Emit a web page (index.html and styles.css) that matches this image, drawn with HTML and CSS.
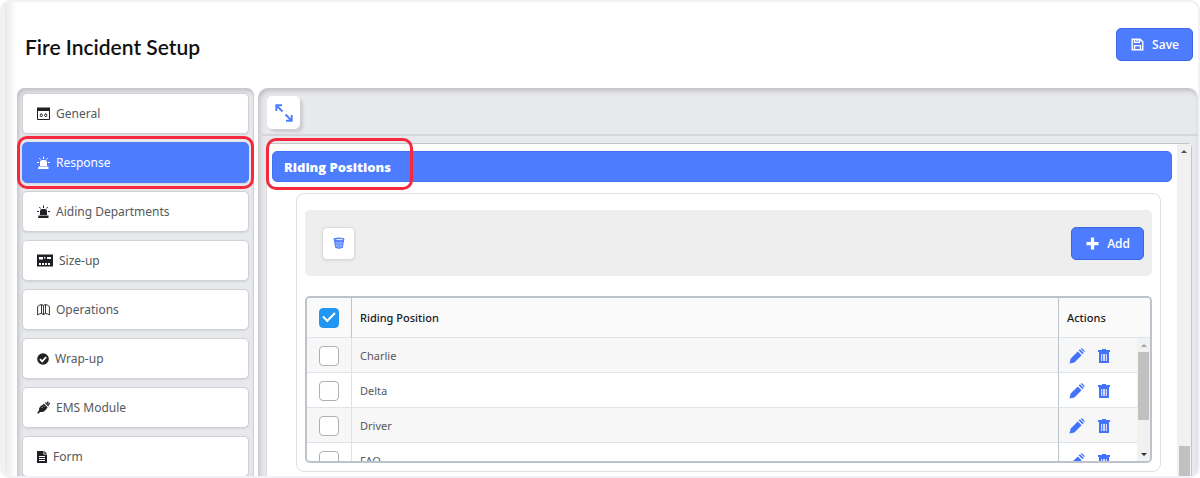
FILE: index.html
```html
<!DOCTYPE html>
<html lang="en">
<head>
    <meta charset="UTF-8">
    <meta name="viewport" content="width=device-width, initial-scale=1.0">
    <title>Fire Incident Setup</title>
    <link rel="stylesheet" href="styles.css">
</head>
<body>
    <!-- Shared icons -->
    <svg class="sprite" aria-hidden="true">
        <symbol id="siren" viewBox="0 0 13 13">
            <path fill="currentColor" d="M1.500 10.500h10V13H1zM3 10V6Q3 4 5.500 4h2Q10 4 10 6v4z"/>
            <path fill="none" stroke="currentColor" d="M6.500.5v2.500M2.300 2l1.400 1.500M10.700 2L9.300 3.500M0 6.500h2M11 6.500h2"/>
        </symbol>
        <symbol id="pencil" viewBox="0 0 16 16">
            <path fill="currentColor" d="M.5 15.500l1.200-5L8.800 3.400 12.600 7.200l-7.200 7.200zM9.700 2.500l1.200-1.200 3.800 3.800-1.200 1.200zM11.700.7q.9-.8 1.900.1l1.600 1.600q.8.900 0 1.800z"/>
        </symbol>
        <symbol id="trash" viewBox="0 0 16 16">
            <path fill="currentColor" d="M2 2h4V1h4v1h4v2H2z"/>
            <path fill="#d5d6fc" stroke="currentColor" stroke-width="2" d="M4 5h8v9H4z"/>
            <path stroke="currentColor" stroke-width=".8" d="M6.500 5v9M9.500 5v9"/>
        </symbol>
    </svg>

    <div class="app">
        <header class="page-header">
            <h1>Fire Incident Setup</h1>
            <button class="btn" type="button">
                <svg class="icon" viewBox="0 0 14 14"><path fill="none" stroke="currentColor" stroke-width="1.500" d="M1.300 1.300h8.500l2.900 2.900v8.500H1.300zM3.800 1.500v3.200h5.200V1.500M3.800 12.500V8.200h6.400v4.300M6.500 1.500v2"/></svg>
                Save
            </button>
        </header>

        <div class="layout">
            <nav class="sidebar">
                <a href="#general">
                    <svg class="icon" viewBox="0 0 13 13"><path fill="none" stroke="currentColor" d="M.5 1.500h12v11H.5z"/><path fill="currentColor" d="M0 .5h13V4H0z"/><path fill="none" stroke="currentColor" d="M4.300 6.500L5.500 8.300 4.300 10 3.100 8.300zM8.700 6.500L9.900 8.300 8.700 10 7.500 8.300z"/></svg>
                    General
                </a>
                <a href="#response" class="active">
                    <svg class="icon"><use href="#siren"/></svg>
                    Response
                </a>
                <a href="#aiding">
                    <svg class="icon"><use href="#siren"/></svg>
                    Aiding Departments
                </a>
                <a href="#size-up">
                    <svg class="icon wide" viewBox="0 0 16 13"><path fill="currentColor" d="M0 .5h16v12H0z"/><path fill="#fff" d="M2 3h4v2.500H2zM7 3h1.500v1.500H7zM10 3h4v2h-4zM2 9h2v2H2zM5 9h2v2H5zM8 9h2v2H8zM11 9h2v2h-2z"/></svg>
                    Size-up
                </a>
                <a href="#operations">
                    <svg class="icon" viewBox="0 0 13 13"><path fill="none" stroke="currentColor" stroke-width=".9" d="M.6 3.500Q2 2 4.500 1.500v9Q2 10.500.6 12zM4.500 1.500Q6 1.500 6.500 3q.5-1.500 2-1.500v9q-1.500 0-2 1.500-.5-1.500-2-1.500M6.500 3v9M8.500 1.500Q11 2 12.400 3.500V12q-1.400-1.500-3.900-1.500"/></svg>
                    Operations
                </a>
                <a href="#wrap-up">
                    <svg class="icon small" viewBox="0 0 12 12"><circle cx="6" cy="6" r="5.800" fill="currentColor"/><path fill="none" stroke="#fff" stroke-width="1.700" d="M3 6.200l2.200 2.200L9.200 4"/></svg>
                    Wrap-up
                </a>
                <a href="#ems">
                    <svg class="icon" viewBox="0 0 13 13"><path fill="currentColor" d="M.5 11.300l1.500-1.800Q1.500 6.500 3.800 5L7 2.700l3.600 3.700-2.500 3.100Q6.300 11.500 3.300 11l-1.900 1.500-1 0zM7.800 2l.9-.8L12 4.700l-.8.9z"/><path stroke="currentColor" stroke-width="1.400" d="M9.800 2.500L11.300.6M11.200 3.800L12.800 2"/><path stroke="#fff" stroke-width=".7" d="M4.500 6l1 1M6.200 4.700l1 1"/></svg>
                    EMS Module
                </a>
                <a href="#form">
                    <svg class="icon narrow" viewBox="0 0 10 12"><path fill="currentColor" d="M0 0h6.500v3.500H10V12H0zM7.300 0L10 2.700H7.300z"/><path stroke="#fff" d="M2 5.500h6M2 7.500h6M2 9.500h6"/></svg>
                    Form
                </a>
            </nav>

            <main class="panel">
                <div class="panel-bar">
                    <button class="icon-btn expand" type="button" aria-label="Expand">
                        <svg viewBox="0 0 18 18"><path fill="none" stroke="currentColor" stroke-width="1.900" d="M1.300 7V1.300H7M1.500 1.500L7.500 7.500M10.500 10.500l6 6M16.700 11v5.700H11"/></svg>
                    </button>
                </div>

                <div class="panel-body">
                    <div class="content">
                        <h2 class="section-title">Riding Positions</h2>

                        <section class="card">
                            <div class="tools">
                                <button class="icon-btn" type="button" aria-label="Delete selected">
                                    <svg class="bin" viewBox="0 0 12 12"><ellipse cx="6" cy="2.500" rx="4.800" ry="1.300" fill="#dfe5ff" stroke="currentColor" stroke-width="1.200"/><path fill="#a9bdfb" stroke="currentColor" stroke-width="1.200" d="M1.500 3.500l1.300 6.800q3.200 1.600 6.400 0l1.300-6.800Q6 5.500 1.500 3.500z"/><path fill="none" stroke="currentColor" stroke-width=".8" d="M2.500 5l6 5.500M5.500 5l4 3.500M9.500 5l-6 5.500M6.500 5l-4 3.500"/></svg>
                                </button>
                                <button class="btn" type="button">
                                    <svg class="icon" viewBox="0 0 14 14"><path stroke="currentColor" stroke-width="3.500" d="M7 .5v13M.5 7h13"/></svg>
                                    Add
                                </button>
                            </div>

                            <div class="grid">
                                <table>
                                    <thead>
                                        <tr>
                                            <th class="check"><input type="checkbox" aria-label="Select all" checked></th>
                                            <th>Riding Position</th>
                                            <th class="actions">Actions</th>
                                        </tr>
                                    </thead>
                                    <tbody>
                                        <tr>
                                            <td class="check"><input type="checkbox" aria-label="Select Charlie"></td>
                                            <td>Charlie</td>
                                            <td class="actions">
                                                <button type="button" aria-label="Edit Charlie"><svg><use href="#pencil"/></svg></button>
                                                <button type="button" aria-label="Delete Charlie"><svg><use href="#trash"/></svg></button>
                                            </td>
                                        </tr>
                                        <tr>
                                            <td class="check"><input type="checkbox" aria-label="Select Delta"></td>
                                            <td>Delta</td>
                                            <td class="actions">
                                                <button type="button" aria-label="Edit Delta"><svg><use href="#pencil"/></svg></button>
                                                <button type="button" aria-label="Delete Delta"><svg><use href="#trash"/></svg></button>
                                            </td>
                                        </tr>
                                        <tr>
                                            <td class="check"><input type="checkbox" aria-label="Select Driver"></td>
                                            <td>Driver</td>
                                            <td class="actions">
                                                <button type="button" aria-label="Edit Driver"><svg><use href="#pencil"/></svg></button>
                                                <button type="button" aria-label="Delete Driver"><svg><use href="#trash"/></svg></button>
                                            </td>
                                        </tr>
                                        <tr>
                                            <td class="check"><input type="checkbox" aria-label="Select FAO"></td>
                                            <td>FAO</td>
                                            <td class="actions">
                                                <button type="button" aria-label="Edit FAO"><svg><use href="#pencil"/></svg></button>
                                                <button type="button" aria-label="Delete FAO"><svg><use href="#trash"/></svg></button>
                                            </td>
                                        </tr>
                                    </tbody>
                                </table>
                                <div class="scrollbar grid-scrollbar">
                                    <span class="arrow up muted"></span>
                                    <span class="thumb"></span>
                                    <span class="arrow down"></span>
                                </div>
                            </div>
                        </section>
                    </div>
                    <div class="scrollbar page-scrollbar">
                        <span class="arrow up"></span>
                        <span class="thumb"></span>
                    </div>
                </div>
            </main>
        </div>
    </div>
</body>
</html>
```
FILE: styles.css
```css
*,
*::after {
    box-sizing: border-box;
}

body {
    margin: 0;
    background-color: #ffffff;
    font-family: "Noto Sans", "Open Sans", sans-serif;
    color: #55585c;
}

.sprite {
    position: absolute;
    width: 0;
    height: 0;
}

.app {
    display: flex;
    flex-direction: column;
    height: 100vh;
    overflow: hidden;
    border: 2px solid #f1f1f6;
    border-left-width: 5px;
    border-radius: 10px;
    background: linear-gradient(to right, #e9e9ea, #ffffff 11px);
}

/* Header */
.page-header {
    display: flex;
    justify-content: space-between;
    align-items: center;
    padding: 26px 5px 27px 20px;
}

h1 {
    margin: 0;
    padding-top: 4px;
    font-family: Lato, sans-serif;
    font-size: 21px;
    font-weight: 600;
    line-height: 24px;
    color: #111111;
}

.btn {
    display: flex;
    align-items: center;
    gap: 8px;
    height: 33px;
    padding: 0 13px 0 14px;
    border: 1px solid #3a68e0;
    border-radius: 5px;
    background-color: #4d7cfe;
    color: #ffffff;
    font: 600 12px "Open Sans", sans-serif;
    cursor: pointer;
}

.icon {
    width: 13px;
    height: 13px;
    flex: none;
}

.icon.wide {
    width: 16px;
}

.icon.small {
    width: 12px;
    height: 12px;
}

.icon.narrow {
    width: 10px;
    height: 12px;
}

.layout {
    display: flex;
    flex: 1;
    gap: 4px;
    min-height: 0;
    padding-left: 12px;
}

/* Sidebar */
.sidebar {
    display: flex;
    flex-direction: column;
    gap: 8px;
    width: 237px;
    flex: none;
    padding: 5px;
    border-radius: 8px 8px 0 0;
    background-color: #e8e9ed;
    box-shadow: inset 2px 3px 5px #bfc0c5, inset -1px 0 #d3d4d9;
}

.sidebar a {
    display: flex;
    flex: none;
    align-items: center;
    gap: 6px;
    height: 41px;
    padding: 0 14px;
    border: 1px solid #d0d1d5;
    border-radius: 5px;
    background-color: #ffffff;
    box-shadow: 0 1px 2px #d3d4d8;
    color: #55585c;
    font-size: 12px;
    text-decoration: none;
}

.sidebar .icon {
    color: #1f2124;
}

.sidebar a.active {
    position: relative;
    border-color: #4d7cfe;
    background-color: #4d7cfe;
    color: #ffffff;
}

.sidebar .active .icon {
    color: #ffffff;
}

/* Red focus frame */
.active::after,
.section-title::after {
    content: "";
    position: absolute;
    inset: -7px -6px;
    border: 3px solid #f5293d;
    border-radius: 10px;
    pointer-events: none;
}

/* Main panel */
.panel {
    display: flex;
    flex: 1;
    flex-direction: column;
    min-width: 0;
    border-radius: 10px 10px 0 0;
    background-color: #e8e9ed;
    box-shadow: inset 2px 3px 5px #bfc0c5;
}

.panel-bar {
    padding: 8px 9px 5px;
    border-bottom: 2px solid #d5d6da;
}

.icon-btn {
    display: grid;
    place-items: center;
    width: 33px;
    height: 33px;
    padding: 0;
    border: 1px solid #dcdcde;
    border-radius: 5px;
    background-color: #ffffff;
    box-shadow: 0 1px 3px #d8d8d8;
    color: #4d7cfe;
    cursor: pointer;
}

.icon-btn.expand {
    border-color: #ffffff;
    box-shadow: 3px 3px 3px #cccdd1;
}

.expand svg {
    width: 18px;
    height: 18px;
}

.bin {
    width: 12px;
    height: 12px;
}

.panel-body {
    display: flex;
    flex: 1;
    min-height: 0;
    margin: 7px 6px 0 8px;
    border: 1px solid #c3c4c8;
    border-bottom: 0;
    border-left-color: #dcdde0;
    border-radius: 5px 5px 0 0;
    background-color: #ffffff;
}

.content {
    flex: 1;
    min-width: 0;
    padding: 7px 5px 0 5px;
}

.section-title {
    display: flex;
    align-items: center;
    position: relative;
    height: 31px;
    margin: 0 0 11px;
    padding: 0 11px;
    border: 1px solid #4373f5;
    border-radius: 5px;
    background-color: #4d7cfe;
    color: #ffffff;
    font-family: "Open Sans", sans-serif;
    font-size: 13px;
    font-weight: 800;
}

.section-title::after {
    inset: -14px auto -9px -7px;
    width: 147px;
}

.card {
    margin: 0 11px 0 24px;
    padding: 16px 8px 8px;
    border: 1px solid #dedfe2;
    border-radius: 8px;
}

.tools {
    display: flex;
    justify-content: space-between;
    align-items: center;
    height: 66px;
    margin-bottom: 20px;
    padding: 0 8px 0 17px;
    border-radius: 5px;
    background-color: #eeeeee;
}

/* Table */
.grid {
    position: relative;
    max-height: 167px;
    overflow: hidden;
    border: 2px solid #bdc3cb;
    border-radius: 5px;
}

table {
    width: 100%;
    border-collapse: separate;
    border-spacing: 0;
    table-layout: fixed;
    font-size: 11px;
}

th,
td {
    height: 35px;
    padding: 0 8px;
    border-bottom: 1px solid #dfe3ea;
    text-align: left;
}

th {
    height: 40px;
    background-color: #fafafa;
    color: #17191c;
    font-weight: 500;
}

tbody tr:nth-child(odd) {
    background-color: #f7f7f7;
}

.check {
    width: 45px;
    padding: 0 0 0 12px;
    border-right: 1px solid #dfe1e6;
}

td.check {
    padding-top: 2px;
}

th.check {
    border-right-color: #bdc3cb;
}

.actions {
    width: 92px;
    border-left: 1px solid #bdc3cb;
}

td.actions {
    padding-left: 10px;
}

.actions button {
    width: 16px;
    height: 16px;
    margin-right: 8px;
    padding: 0;
    border: 0;
    background: none;
    color: #4373fb;
    vertical-align: middle;
    cursor: pointer;
}

.actions svg {
    display: block;
    width: 16px;
    height: 16px;
}

input[type="checkbox"] {
    appearance: none;
    display: block;
    width: 20px;
    height: 20px;
    margin: 0;
    border: 1px solid #aeb0b3;
    border-radius: 4px;
    background-color: #ffffff;
}

input[type="checkbox"]:checked {
    display: grid;
    place-items: center;
    border-color: #2196f3;
    background-color: #2196f3;
}

input[type="checkbox"]:checked::after {
    content: "";
    width: 12px;
    height: 7px;
    margin-bottom: 4px;
    border: solid #ffffff;
    border-width: 0 0 2px 2px;
    transform: rotate(-45deg);
}

/* Scrollbars */
.scrollbar {
    display: flex;
    flex-direction: column;
    align-items: center;
    background-color: #f1f1f1;
}

.page-scrollbar {
    justify-content: space-between;
    width: 14px;
    padding-top: 6px;
}

.page-scrollbar .thumb {
    width: 11px;
    height: 30px;
}

.grid-scrollbar {
    position: absolute;
    top: 40px;
    right: 0;
    bottom: 0;
    width: 13px;
    justify-content: space-between;
    padding: 6px 0 5px;
}

.grid-scrollbar .thumb {
    width: 11px;
    height: 68px;
    margin-bottom: 29px;
}

.thumb {
    background-color: #c1c1c1;
}

.arrow {
    border: 3px solid transparent;
}

.arrow.up {
    border-top: 0;
    border-bottom-color: #505050;
}

.arrow.down {
    border-bottom: 0;
    border-top-color: #303030;
}

.arrow.muted {
    border-bottom-color: #a3a3a3;
}
```
